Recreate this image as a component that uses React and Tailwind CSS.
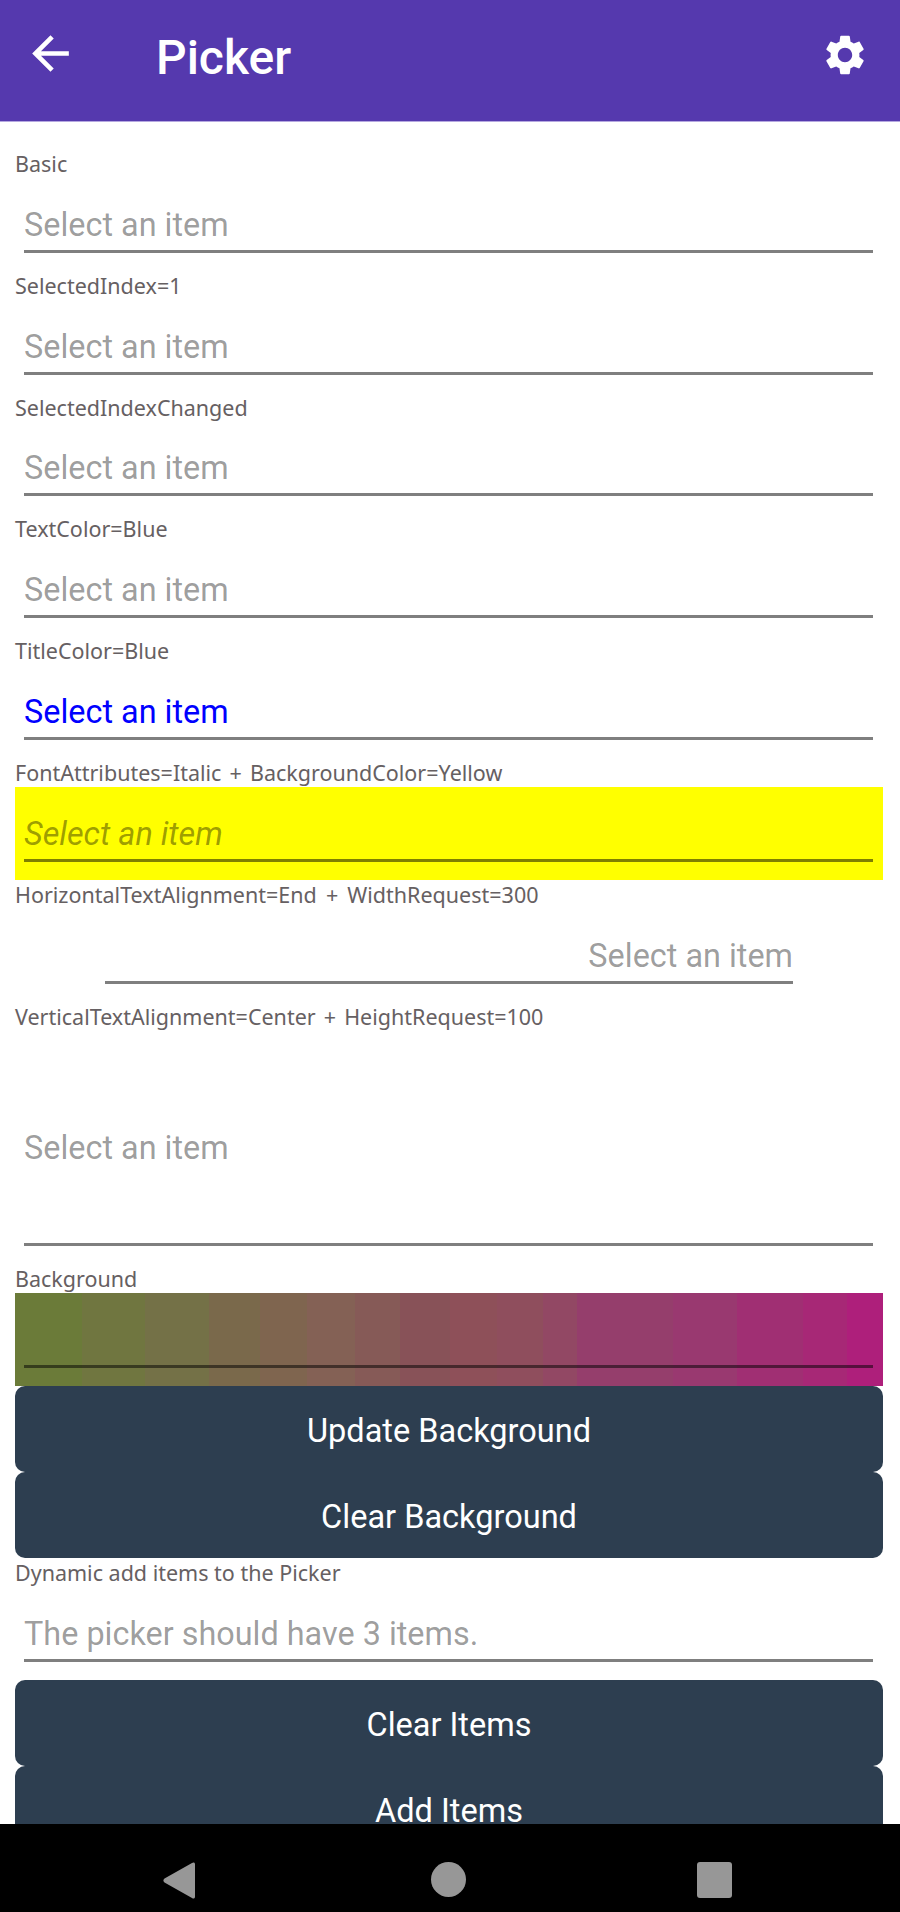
const Label = ({ children, spacing = '[word-spacing:1px]' }) => (
  <div className={`h-[28.8px] px-[15px] font-['Noto_Sans',sans-serif] text-[21.5px] leading-[29px] text-[#666062] whitespace-nowrap ${spacing}`}>
    {children}
  </div>
);

const Picker = ({ text = 'Select an item', className = '', textClass = 'text-black/40' }) => (
  <div className={`ml-[15px] mr-[17px] h-[93px] pl-[9px] pr-[10px] pt-[29px] ${className}`}>
    <div className={`h-[36px] text-[32.4px] leading-[36px] whitespace-nowrap ${textClass}`}>{text}</div>
    <div className="mt-[7px] h-[3px] bg-black/50" />
  </div>
);

const Btn = ({ children }) => (
  <div className="ml-[15px] mr-[17px] h-[86px] pt-[4px] rounded-[10px] bg-[#2d3e50] flex items-center justify-center text-[32.5px] text-white">
    {children}
  </div>
);

export default function App() {
  return (
    <div className="h-[1912px] flex flex-col bg-white overflow-hidden font-['Roboto',sans-serif]">
      <header className="h-[122px] shrink-0 bg-[#5539ae] border-b border-[#b5a8e0] flex items-start text-white">
        <svg viewBox="0 0 24 24" className="ml-[23px] mt-[26px] w-[55px] h-[55px]" fill="currentColor">
          <path d="M20 11H7.83l5.59-5.59L12 4l-8 8 8 8 1.41-1.41L7.83 13H20v-2z" />
        </svg>
        <div className="ml-[78px] mt-[30px] text-[48px] leading-[56px] font-medium">Picker</div>
        <svg viewBox="0 0 24 24" className="ml-auto mr-[31px] mt-[31px] w-[48px] h-[48px]" fill="currentColor">
          <path d="M19.14 12.94c.04-.3.06-.61.06-.94 0-.32-.02-.64-.07-.94l2.03-1.58c.18-.14.23-.41.12-.61l-1.92-3.32c-.12-.22-.37-.29-.59-.22l-2.39.96c-.5-.38-1.03-.7-1.62-.94l-.36-2.54c-.04-.24-.24-.41-.48-.41h-3.84c-.24 0-.43.17-.47.41l-.36 2.54c-.59.24-1.13.57-1.62.94l-2.39-.96c-.22-.08-.47 0-.59.22L2.74 8.87c-.12.21-.08.47.12.61l2.03 1.58c-.05.3-.09.63-.09.94s.02.64.07.94l-2.03 1.58c-.18.14-.23.41-.12.61l1.92 3.32c.12.22.37.29.59.22l2.39-.96c.5.38 1.03.7 1.62.94l.36 2.54c.05.24.24.41.48.41h3.84c.24 0 .44-.17.47-.41l.36-2.54c.59-.24 1.13-.56 1.62-.94l2.39.96c.22.08.47 0 .59-.22l1.92-3.32c.12-.22.07-.47-.12-.61l-2.01-1.58zM12 15.6c-1.98 0-3.6-1.62-3.6-3.6s1.62-3.6 3.6-3.6 3.6 1.62 3.6 3.6-1.62 3.6-3.6 3.6z" />
        </svg>
      </header>

      <main className="flex-1 min-h-0 overflow-hidden pt-[27px]">
        <Label>Basic</Label>
        <Picker />
        <Label>SelectedIndex=1</Label>
        <Picker />
        <Label>SelectedIndexChanged</Label>
        <Picker />
        <Label>TextColor=Blue</Label>
        <Picker />
        <Label>TitleColor=Blue</Label>
        <Picker textClass="text-[#0000ff]" />
        <Label spacing="[word-spacing:2.5px]">FontAttributes=Italic + BackgroundColor=Yellow</Label>
        <Picker className="bg-[#ffff00]" textClass="text-black/40 italic" />
        <Label spacing="[word-spacing:3.5px]">HorizontalTextAlignment=End + WidthRequest=300</Label>
        <div className="ml-[105px] w-[688px] h-[93px] pt-[29px]">
          <div className="h-[36px] text-right text-[32.4px] leading-[36px] text-black/40">Select an item</div>
          <div className="mt-[7px] h-[3px] bg-black/50" />
        </div>
        <Label spacing="[word-spacing:2.5px]">VerticalTextAlignment=Center + HeightRequest=100</Label>
        <div className="ml-[24px] mr-[27px] h-[234px] pt-[100px]">
          <div className="h-[36px] text-[32.4px] leading-[36px] text-black/40">Select an item</div>
          <div className="mt-[77px] h-[3px] bg-black/50" />
        </div>
        <Label>Background</Label>
        {/* banded like the device render, stops are px from the box's left edge */}
        <Picker
          className="bg-[linear-gradient(90deg,#6b7b39_0_67px,#707640_67px_130px,#747147_130px_194px,#7a694b_194px_245px,#7f654f_245px_292px,#846155_292px_340px,#865a57_340px_385px,#885258_385px_435px,#8e5059_435px_482px,#8f4e5d_482px_528px,#924864_528px_562px,#953e6c_562px_658px,#993970_658px_722px,#a02f73_722px_788px,#a72876_788px_832px,#ae1f7b_832px)]"
          textClass="text-transparent"
        />
        <Btn>Update Background</Btn>
        <Btn>Clear Background</Btn>
        <Label spacing="[word-spacing:0px]">Dynamic add items to the Picker</Label>
        <Picker text="The picker should have 3 items." />
        <Btn>Clear Items</Btn>
        <Btn>Add Items</Btn>
      </main>

      <nav className="h-[88px] shrink-0 bg-black flex items-start pt-[38px]">
        <svg viewBox="0 0 32 37" className="ml-[163px] w-[32px] h-[37px]" fill="#979797">
          <path d="M29 1c1.5-1.2 3-.5 3 1.2v32.6c0 1.7-1.5 2.4-3 1.2L1.5 20.5c-1.5-1.2-1.5-2.8 0-4z" />
        </svg>
        <div className="ml-[236px] w-[35px] h-[35px] rounded-full bg-[#979797]" />
        <div className="ml-[231px] w-[35px] h-[36px] rounded-[3px] bg-[#979797]" />
      </nav>
    </div>
  );
}
